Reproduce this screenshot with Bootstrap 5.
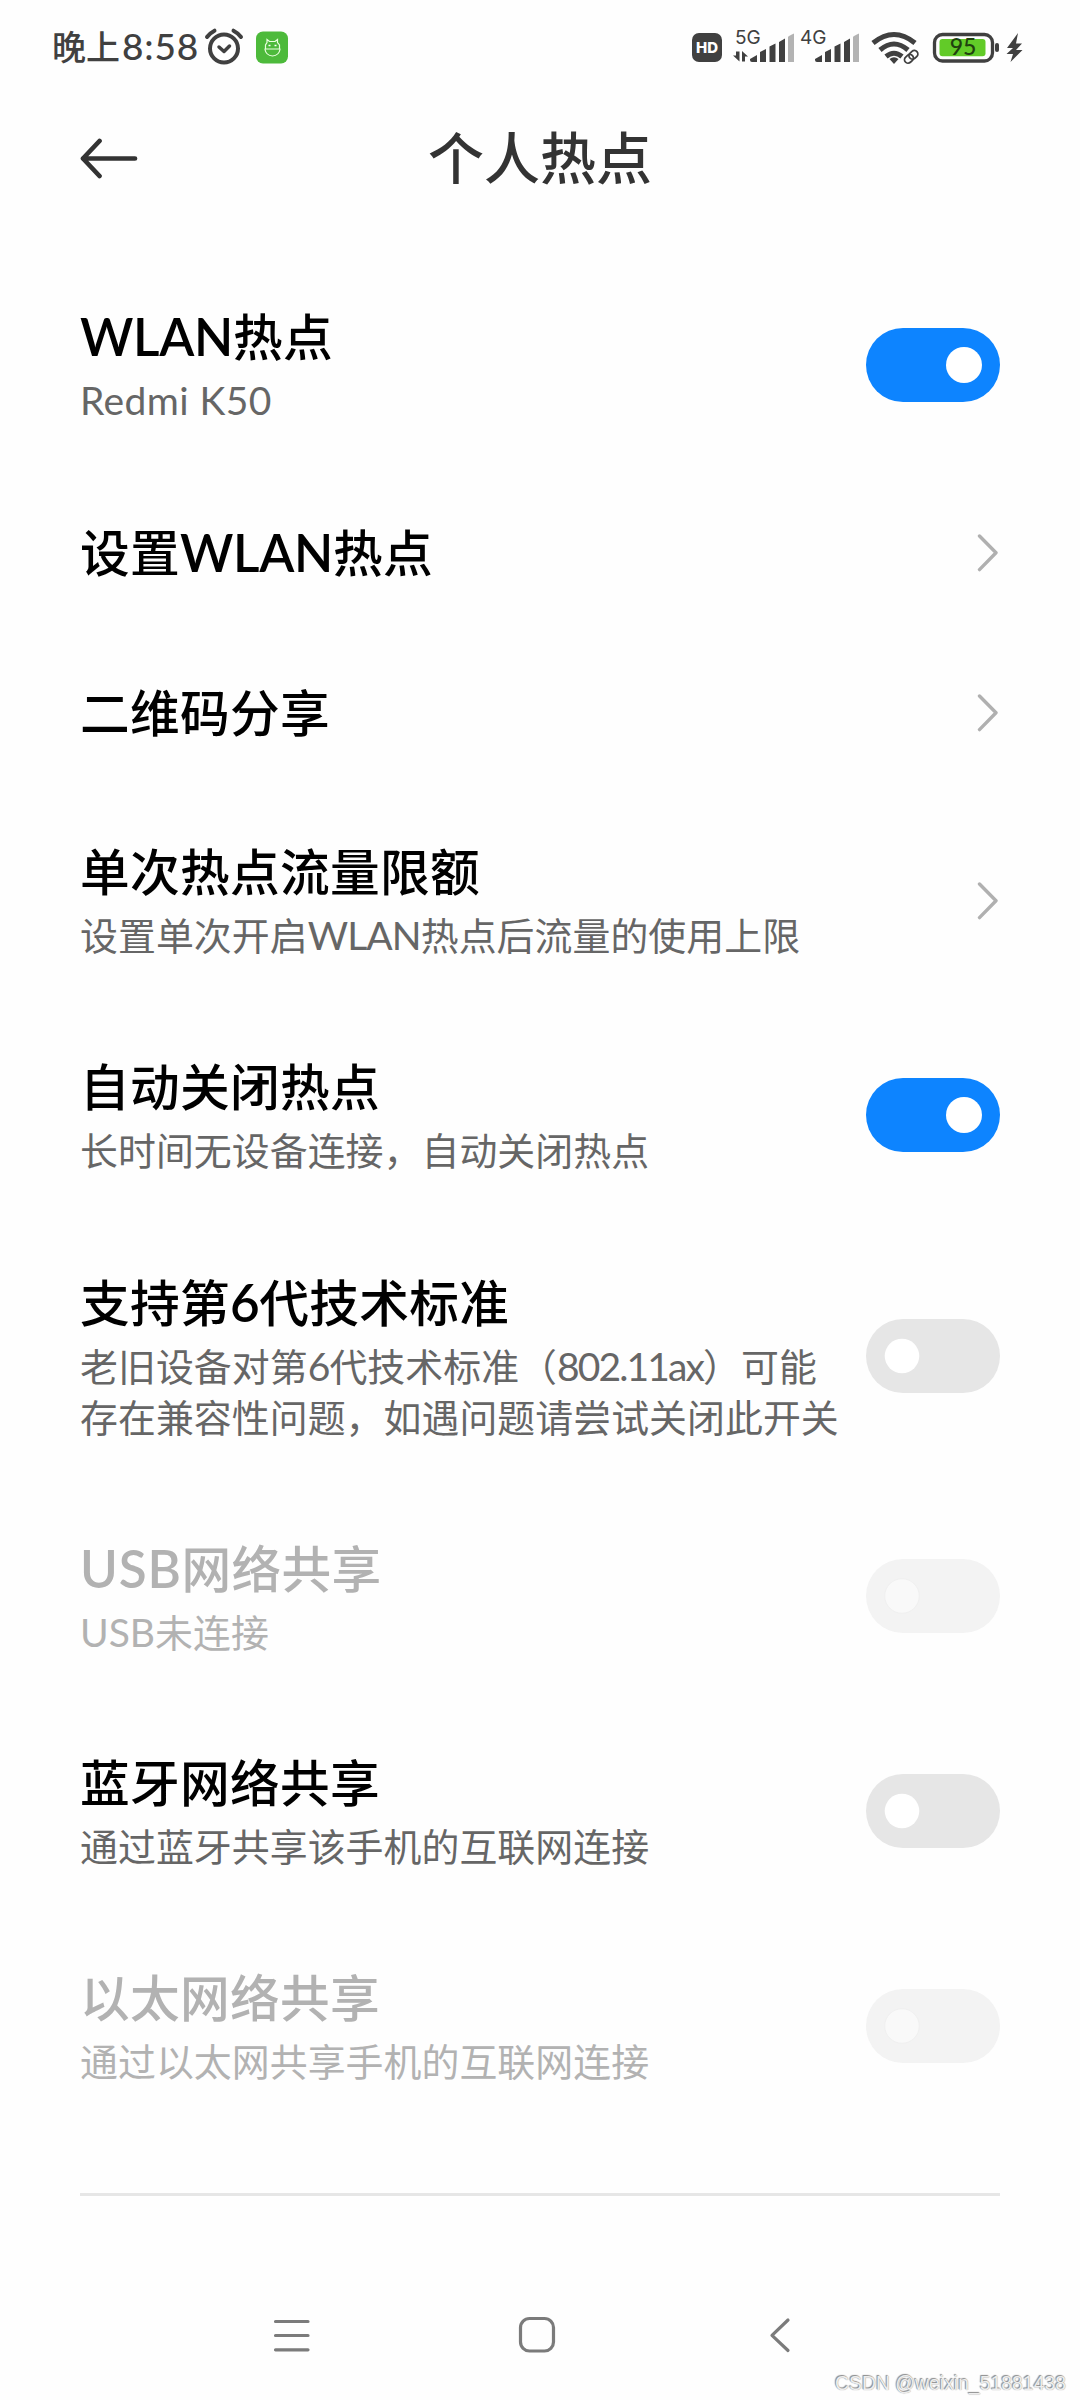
<!DOCTYPE html>
<html lang="zh-CN">
<head>
<meta charset="utf-8">
<meta name="viewport" content="width=device-width, initial-scale=1">
<title>个人热点</title>
<link href="https://cdn.jsdelivr.net/npm/bootstrap@5.3.0/dist/css/bootstrap.min.css" rel="stylesheet">
<style>
  body { width: 1080px; height: 2400px; background: #fefefe; color: #000; font-family: "Noto Sans CJK SC", sans-serif; overflow: hidden; }
  svg { display: block; flex: none; }
  .screen { height: 2400px; }
  .status-bar { height: 94px; padding: 0 54px 0 52px; color: #404040; }
  .clock { font-size: 34px; font-weight: 500; line-height: 50px; margin-bottom: 3px; white-space: nowrap; }
  .clock-digits { font-family: Lato, sans-serif; font-size: 37px; letter-spacing: .8px; margin-left: 2px; }
  .alarm-icon { margin-left: 5px; }
  .app-icon { margin-left: 12px; }
  .title-bar { height: 128px; padding: 0 80px; margin-bottom: 35px; color: #333; }
  .page-title { font-size: 56px; font-weight: 500; line-height: 80px; margin: 0; padding-bottom: 7px; }
  .edge { width: 60px; }
  .setting { height: 215px; padding: 0 80px; }
  .setting-single { height: 160px; }
  .setting-tall { height: 267px; }
  .setting-off-usb { height: 214px; }
  .setting-text { padding-bottom: 4px; }
  .setting-name { font-size: 49.7px; font-weight: 500; letter-spacing: .3px; line-height: 66px; margin-bottom: 6px; white-space: nowrap; }
  .setting-single .setting-name { margin-bottom: 0; padding-bottom: 5px; }
  .setting-note { font-size: 37.9px; letter-spacing: .05px; line-height: 51px; color: #666; white-space: nowrap; }
  .latin { font-family: Lato, sans-serif; font-size: 1.03em; line-height: 1; }
  .setting-name .latin { font-weight: 600; letter-spacing: -.3px; }
  .setting-note .latin { letter-spacing: -.9px; }
  .setting-note .latin-name { letter-spacing: .4px; }
  .setting-note .latin-tight { letter-spacing: -1.9px; }
  .setting-off .setting-name .latin { letter-spacing: .8px; }
  .setting-off .setting-note .latin { letter-spacing: 0; }
  .setting-off .setting-name, .setting-off .setting-note { color: #b2b2b2; }
  .divider { height: 3px; margin: 60px 80px 0; background: #e6e6e6; }
  .nav-keys { padding: 120px 0 0 273px; }
  .watermark { right: 14px; bottom: 5px; font: 19.4px/24px "Liberation Sans", sans-serif; color: #eee; text-shadow: 0 0 1px #888, -1px -1px 1px #888; white-space: nowrap; }
</style>
</head>
<body>
<svg width="0" height="0" class="position-absolute">
  <symbol id="on" viewBox="0 0 134 74"><rect width="134" height="74" rx="37" fill="#0d84ff"/><circle cx="98" cy="37" r="18" fill="#fff"/></symbol>
  <symbol id="off" viewBox="0 0 134 74"><rect width="134" height="74" rx="37" fill="#e6e6e6"/><circle cx="36" cy="37" r="17.3" fill="#fff"/></symbol>
  <symbol id="disabled" viewBox="0 0 134 74"><rect width="134" height="74" rx="37" fill="#f3f3f3"/><circle cx="36" cy="37" r="17.3" fill="#f9f9f9" stroke="#f0f0f0"/></symbol>
  <symbol id="go" viewBox="0 0 24 40"><path d="M3.500 4L20 20.800L3.500 37.600" fill="none" stroke="#b0b0b0" stroke-width="3.400" stroke-linecap="round" stroke-linejoin="round"/></symbol>
</svg>
<main class="screen position-relative d-flex flex-column">
  <header class="status-bar d-flex justify-content-between align-items-center">
    <div class="d-flex align-items-center">
      <span class="clock">晚上<span class="clock-digits">8:58</span></span>
      <svg class="alarm-icon" width="40" height="38" viewBox="0 0 40 38" fill="none" stroke="#404040" stroke-linecap="round"><circle cx="20" cy="20.500" r="14" stroke-width="4"/><path d="M3 9Q6 5 10.500 2.700M37 9Q34 5 29.500 2.700" stroke-width="4"/><path d="M15 19L20 23.500L25.500 18" stroke-width="3.500" stroke-linejoin="round"/></svg>
      <svg class="app-icon" width="33" height="33" viewBox="0 0 33 33"><rect y=".5" width="32" height="32" rx="7" fill="#4dba3b"/><path d="M9.500 17.500V14L11 11.500V8.500L13.500 10.500H19L21.500 8.500V11.500L23.500 14V17.500M8.500 18H24.500M9 18.500Q10 24.500 16.500 25Q23 24.500 24 18.500" fill="none" stroke="#eaffdf" stroke-width="1.200"/><path d="M12.500 14.500h2M18.500 14.500h2" stroke="#fff" stroke-width="1.500"/></svg>
    </div>
    <svg width="336" height="56" viewBox="690 18 336 56" fill="#404040">
      <rect x="692" y="32" width="30" height="29" rx="7"/>
      <text x="707" y="52" text-anchor="middle" font-family="Inter" font-size="15" font-weight="800" fill="#fff">HD</text>
      <text x="735" y="42.500" font-family="Inter" font-size="19">5G</text>
      <text x="800" y="42.500" font-family="Inter" font-size="19">4G</text>
      <path d="M736 50.500H739.500V60.500L733 54.500H736ZM742 60.500V50L748 55.500H745V60.500Z"/>
      <g id="bars"><path d="M750 58L757 54V61H752Q750 61 750 59ZM760 51L766 48V61H760ZM769.500 45.500L775.500 42.500V61H769.500ZM779 41L785 37.500V61H779Z"/><path d="M788 36Q788 35 794 32.500V61H788Z" fill="#b3b3b3"/></g>
      <use href="#bars" x="65"/>
      <g fill="none" stroke="#404040" stroke-width="5"><path d="M873 42Q894 25 915 42"/><path d="M880 49Q894 37 908 49"/><path d="M886 55.500Q894 49 902 55.500"/></g><path d="M889.500 58Q894 54.500 898.500 58L894 63Z"/>
      <g transform="rotate(-42 911 56)"><rect x="902" y="50.500" width="19" height="11" fill="#fefefe"/><g fill="none" stroke="#404040" stroke-width="1.800"><rect x="903.500" y="52.500" width="9.500" height="7" rx="3.500"/><rect x="909.500" y="52.500" width="9.500" height="7" rx="3.500"/></g></g>
      <rect x="934.500" y="33.500" width="58" height="26.500" rx="8" fill="none" stroke="#404040" stroke-width="3.300"/><rect x="939.500" y="38" width="46" height="17.300" rx="3" fill="#62cb28"/><rect x="995" y="42" width="4" height="9" rx="2"/>
      <text x="963" y="54" text-anchor="middle" font-family="Lato" font-weight="500" font-size="23" fill="#20400f">95</text>
      <path d="M1018 32L1007 47H1013L1006.500 53H1013L1010.500 61L1022.500 49H1016L1022 42.500H1016Z"/>
    </svg>
  </header>
  <div class="title-bar d-flex justify-content-between align-items-center">
    <div class="edge"><svg width="60" height="44" viewBox="0 0 60 44" fill="none" stroke="#333" stroke-width="4.700" stroke-linecap="round" stroke-linejoin="round"><path d="M19.500 5L3 22.500L19.500 40M3 22.500H55"/></svg></div>
    <h1 class="page-title">个人热点</h1>
    <div class="edge"></div>
  </div>

  <section class="setting d-flex justify-content-between align-items-center"><div class="setting-text"><div class="setting-name"><span class="latin">WLAN</span>热点</div><div class="setting-note"><span class="latin latin-name">Redmi K50</span></div></div><svg width="134" height="74"><use href="#on"/></svg></section>
  <section class="setting setting-single d-flex justify-content-between align-items-center"><div class="setting-name">设置<span class="latin">WLAN</span>热点</div><svg width="24" height="40"><use href="#go"/></svg></section>
  <section class="setting setting-single d-flex justify-content-between align-items-center"><div class="setting-name">二维码分享</div><svg width="24" height="40"><use href="#go"/></svg></section>
  <section class="setting d-flex justify-content-between align-items-center"><div class="setting-text"><div class="setting-name">单次热点流量限额</div><div class="setting-note">设置单次开启<span class="latin">WLAN</span>热点后流量的使用上限</div></div><svg width="24" height="40"><use href="#go"/></svg></section>
  <section class="setting d-flex justify-content-between align-items-center"><div class="setting-text"><div class="setting-name">自动关闭热点</div><div class="setting-note">长时间无设备连接，自动关闭热点</div></div><svg width="134" height="74"><use href="#on"/></svg></section>
  <section class="setting setting-tall d-flex justify-content-between align-items-center"><div class="setting-text"><div class="setting-name">支持第<span class="latin">6</span>代技术标准</div><div class="setting-note">老旧设备对第<span class="latin">6</span>代技术标准（<span class="latin latin-tight">802.11ax</span>）可能<br>存在兼容性问题，如遇问题请尝试关闭此开关</div></div><svg width="134" height="74"><use href="#off"/></svg></section>
  <section class="setting setting-off setting-off-usb d-flex justify-content-between align-items-center"><div class="setting-text"><div class="setting-name"><span class="latin">USB</span>网络共享</div><div class="setting-note"><span class="latin">USB</span>未连接</div></div><svg width="134" height="74"><use href="#disabled"/></svg></section>
  <section class="setting d-flex justify-content-between align-items-center"><div class="setting-text"><div class="setting-name">蓝牙网络共享</div><div class="setting-note">通过蓝牙共享该手机的互联网连接</div></div><svg width="134" height="74"><use href="#off"/></svg></section>
  <section class="setting setting-off d-flex justify-content-between align-items-center"><div class="setting-text"><div class="setting-name">以太网络共享</div><div class="setting-note">通过以太网共享手机的互联网连接</div></div><svg width="134" height="74"><use href="#disabled"/></svg></section>
  <div class="divider"></div>

  <nav class="nav-keys">
    <svg width="520" height="38" viewBox="273 2316 520 38" fill="none" stroke="#7b7b7b" stroke-width="3.200" stroke-linecap="round" stroke-linejoin="round"><path d="M275.500 2321.500H308M275.500 2335.500H308M275.500 2349.800H308"/><rect x="520.500" y="2318.500" width="33" height="32.500" rx="9"/><path d="M788 2320L772 2335.300L788 2350.500"/></svg>
  </nav>
  <div class="watermark position-absolute">CSDN @weixin_51881438</div>
</main>
<script src="https://cdn.jsdelivr.net/npm/bootstrap@5.3.0/dist/js/bootstrap.bundle.min.js"></script>
</body>
</html>
